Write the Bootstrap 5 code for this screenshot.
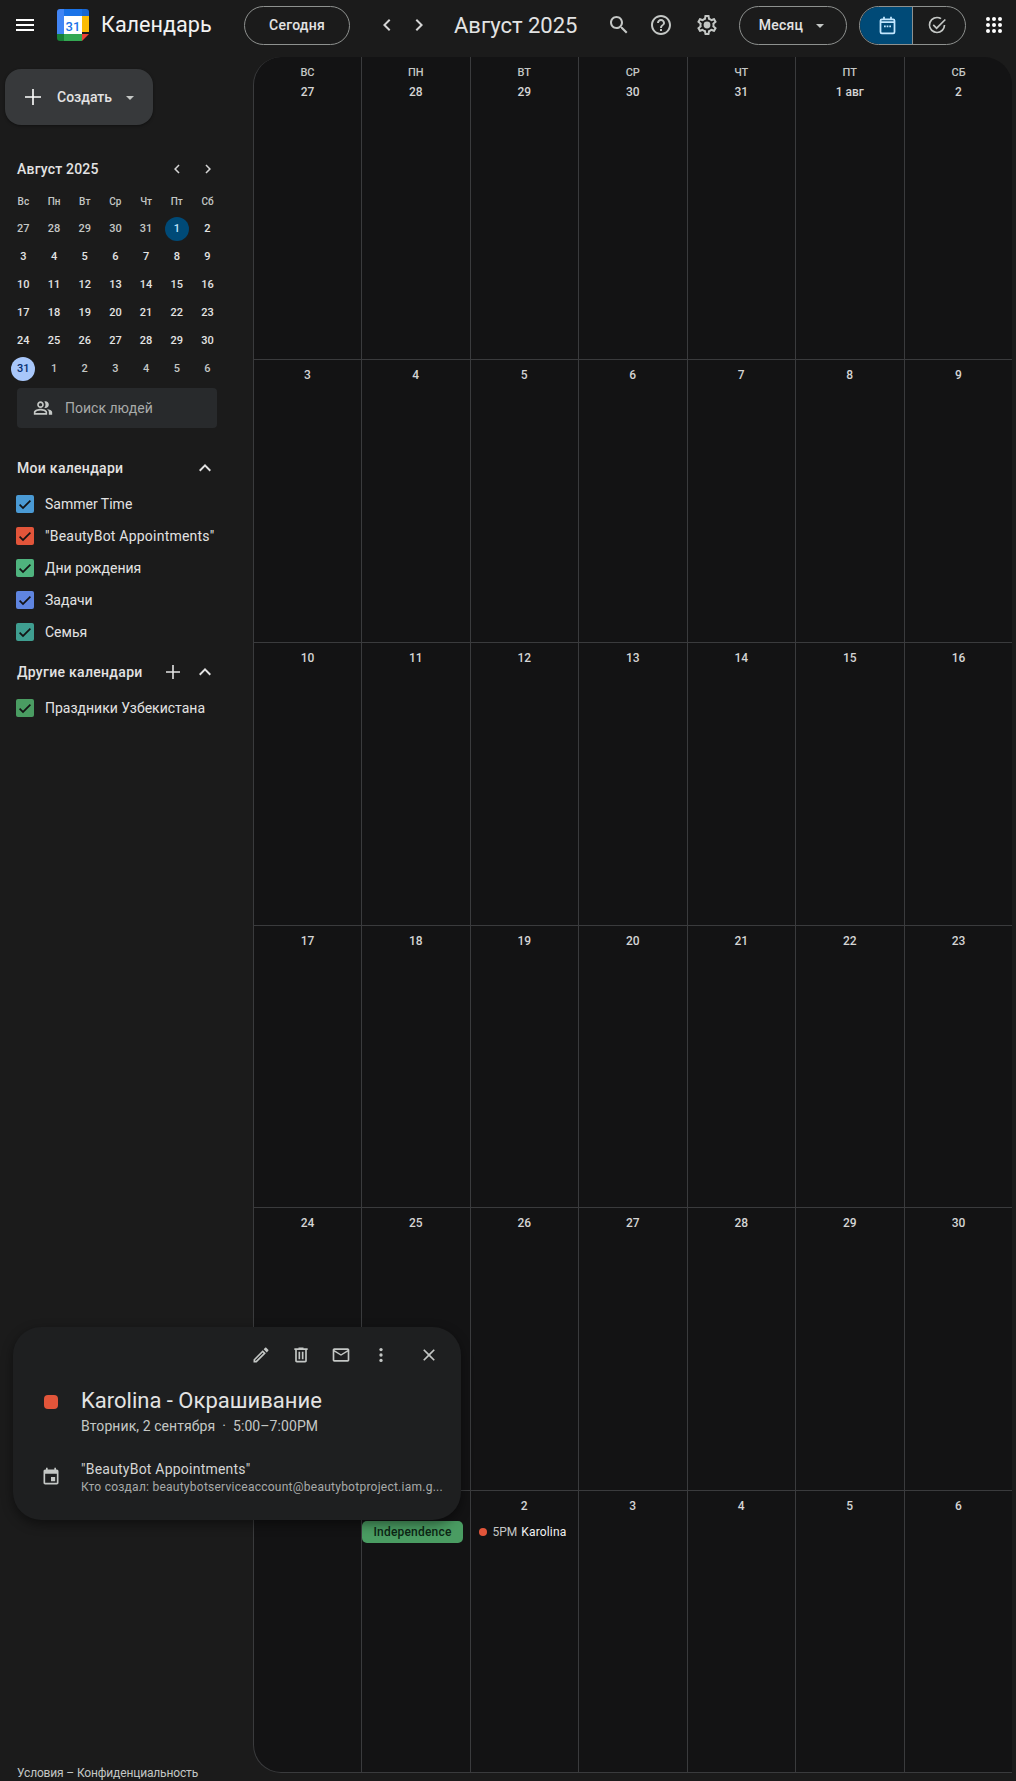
<!DOCTYPE html>
<html lang="ru">
<head>
    <meta charset="UTF-8">
    <meta name="viewport" content="width=device-width, initial-scale=1.0">
    <title>Календарь</title>
    <link href="https://cdn.jsdelivr.net/npm/bootstrap@5.3.3/dist/css/bootstrap.min.css" rel="stylesheet">
    <style>
        html, body { height: 100%; }
        body {
            background-color: #1b1b1b;
            color: #e3e3e3;
            font-family: Roboto, "Noto Sans", sans-serif;
            font-size: 14px;
            width: 1016px;
            height: 1781px;
            overflow: hidden;
            position: relative;
        }
        svg { display: block; fill: currentColor; flex: none; }

        /* top bar */
        .topbar { height: 57px; padding-bottom: 7px; }
        .burger { margin-left: 13px; width: 24px; color: #fff; }
        .logo-svg { margin-left: 20px; }
        .brand { margin-left: 12px; width: 127px; font-size: 21.6px; color: #f2f2f2; white-space: nowrap; }
        .pill-btn {
            height: 39px;
            border: 1px solid #8e918f;
            border-radius: 20px;
            color: #e3e3e3;
            font-weight: 500;
            font-size: 14px;
            letter-spacing: .25px;
        }
        .today-btn { width: 106px; }
        .nav-ico { width: 24px; color: #d5d5d5; }
        .nav-prev { margin-left: 25px; }
        .nav-next { margin-left: 8px; }
        .month-title { margin-left: 23px; width: 153px; font-size: 22px; color: #e3e3e3; white-space: nowrap; }
        .tool-ico { color: #c4c7c5; }
        .tool-help { margin-left: 18px; }
        .tool-gear { margin-left: 22px; }
        .view-btn { width: 108px; margin-left: 20px; gap: 13px; padding-right: 3px !important; }
        .caret-down { width: 0; height: 0; border-left: 4px solid transparent; border-right: 4px solid transparent; border-top: 4px solid #c4c7c5; margin-top: 2px; }
        .view-toggle { margin-left: 12px; width: 107px; height: 39px; border: 1px solid #8e918f; border-radius: 20px; overflow: hidden; }
        .toggle-on { width: 53px; background-color: #004a77; color: #c2e7ff; border-right: 1px solid #8e918f; padding-left: 4px; }
        .toggle-off { width: 53px; color: #c4c7c5; padding-right: 3px; }
        .apps-ico { margin-left: 16px; color: #fff; }

        /* sidebar */
        .side { width: 253px; height: 1724px; position: relative; flex: none; }
        .create-btn {
            width: 148px;
            height: 56px;
            margin: 12px 0 0 5px;
            background-color: #37393b;
            border-radius: 16px;
            box-shadow: 0 1px 3px rgba(0, 0, 0, .4);
            font-weight: 500;
            color: #e3e3e3;
        }
        .create-plus { margin-left: 16px; color: #fff; }
        .create-label { margin-left: 12px; }
        .create-caret { margin-left: 14px; }
        .mini-head { margin: 34px 36px 0 17px; height: 20px; }
        .mini-title { font-size: 14px; font-weight: 500; color: #e3e3e3; letter-spacing: .2px; }
        .mini-arrows { gap: 13px; }
        .mini-nav { width: 18px; color: #d5d5d5; }
        .mini-grid {
            display: grid;
            grid-template-columns: repeat(7, 30.7px);
            grid-auto-rows: 28px;
            margin: 8px 0 0 8px;
            font-size: 11px;
            font-weight: 500;
            color: #e3e3e3;
        }
        .mini-cell { display: flex; align-items: center; justify-content: center; }
        .mini-dow { height: 28px; font-size: 10px; color: #c4c7c5; }
        .mini-cell span { width: 24px; height: 24px; border-radius: 50%; display: flex; align-items: center; justify-content: center; }
        .mini-faded { color: #c4c7c5; }
        .mini-sel { background-color: #004a77; color: #c2e7ff; }
        .mini-today { background-color: #a8c7fa; color: #062e6f; }
        .people-box {
            width: 200px;
            height: 40px;
            margin: 5px 0 0 17px;
            padding-left: 16px;
            gap: 12px;
            background-color: #282a2c;
            border-radius: 4px;
            color: #a8abaa;
        }
        .people-box svg { color: #c4c7c5; }
        .cal-head { margin-left: 17px; width: 200px; height: 24px; font-weight: 500; color: #e3e3e3; letter-spacing: .3px; }
        .cal-head-my { margin-top: 28px; margin-bottom: 8px; }
        .cal-head-other { margin-top: 12px; margin-bottom: 8px; }
        .cal-head svg { color: #e3e3e3; }
        .cal-row { height: 32px; margin-left: 16px; gap: 11px; color: #e3e3e3; white-space: nowrap; }
        .check-box { width: 18px; height: 18px; border-radius: 2px; color: #131314; display: flex; align-items: center; justify-content: center; flex: none; }
        .quoted-name { letter-spacing: .22px; }
        .side-foot { position: absolute; left: 17px; top: 1707px; font-size: 12px; letter-spacing: -.15px; color: #c4c7c5; white-space: nowrap; }

        /* month grid */
        .month-grid {
            display: grid;
            grid-template-columns: 108px 108.5px 108.5px 108.5px 108.5px 108.5px 108px;
            grid-template-rows: 303px 283px 283px 282px 283px 282px;
            width: 759px;
            height: 1716px;
            background-color: #131314;
            border-left: 1px solid #3a3b3d;
            border-bottom: 1px solid #3a3b3d;
            border-radius: 28px 28px 0 28px;
            overflow: hidden;
        }
        .day-cell { border-right: 1px solid #3a3b3d; border-bottom: 1px solid #3a3b3d; text-align: center; font-size: 12px; font-weight: 500; color: #d5d5d5; padding-top: 7px; min-width: 0; }
        .day-cell:nth-child(7n) { border-right: 0; }
        .day-cell:nth-last-child(-n+7) { border-bottom: 0; }
        .day-first { padding-top: 8px; }
        .dow-label { font-size: 11px; line-height: 16px; color: #c4c7c5; }
        .day-num { line-height: 16px; margin-top: 3px; }
        .day-cell.has-events .day-num { margin-top: 0; }
        .chip-green { width: 101px; height: 22px; margin-top: 7px; background-color: #4a9c62; border-radius: 5px; color: #0c2614; line-height: 22px; font-weight: 500; letter-spacing: .2px; }
        .chip-dot { margin-top: 7px; height: 22px; padding-left: 8px; gap: 6px; font-size: 12px; font-weight: 400; white-space: nowrap; }
        .dot-red { width: 8px; height: 8px; border-radius: 50%; background-color: #e2553a; flex: none; }
        .chip-time { color: #c4c7c5; }
        .chip-name { color: #f2f2f2; margin-left: -2px; letter-spacing: .15px; }

        /* event popup */
        .event-pop {
            position: absolute;
            left: 13px;
            top: 1327px;
            width: 448px;
            height: 193px;
            background-color: #1e1f20;
            border-radius: 28px;
            box-shadow: 0 4px 12px rgba(0, 0, 0, .45);
            padding: 16px 22px 0 31px;
        }
        .pop-tools { height: 24px; }
        .pop-tools svg { color: #c4c7c5; margin-left: 20px; }
        .pop-tools svg.pop-close { margin-left: 28px; }
        .pop-body { margin-top: 20px; }
        .pop-mark { width: 37px; flex: none; }
        .pop-dot { width: 14px; height: 14px; border-radius: 4px; background-color: #e2553a; }
        .pop-title { font-size: 22px; line-height: 28px; color: #e3e3e3; white-space: nowrap; }
        .pop-sub { line-height: 20px; margin-top: 1px; color: #c4c7c5; white-space: nowrap; letter-spacing: .08px; }
        .pop-sep { margin: 0 7px; }
        .pop-cal { margin-top: 23px; }
        .pop-cal-ico { color: #c4c7c5; margin-left: -3px; margin-right: 20px; }
        .pop-cal-name { line-height: 20px; color: #d5d5d5; }
        .pop-cal-by { font-size: 12px; line-height: 16px; color: #a8abaa; white-space: nowrap; letter-spacing: .25px; }
    </style>
</head>
<body>

    <header class="topbar d-flex align-items-center">
        <svg class="burger" width="24" height="24" viewBox="0 0 24 24"><path d="M3 18h18v-2H3v2zm0-5h18v-2H3v2zm0-7v2h18V6H3z"/></svg>
        <svg class="logo-svg" width="32" height="32" viewBox="0 0 32 32">
            <path fill="#fff" d="M7 7h18v18H7z"/>
            <path fill="#1a73e8" d="M7 0h18v7H7z"/>
            <path fill="#1967d2" d="M25 0h4a3 3 0 0 1 3 3v4h-7z"/>
            <path fill="#4285f4" d="M3 0h4v7H0V3a3 3 0 0 1 3-3z"/>
            <path fill="#4285f4" d="M0 7h7v18H0z"/>
            <path fill="#fbbc04" d="M25 7h7v16h-7z"/>
            <path fill="#34a853" d="M7 25h18v7H7z"/>
            <path fill="#188038" d="M0 25h7v7H3a3 3 0 0 1-3-3z"/>
            <path fill="#ea4335" d="M25 32v-7h7z"/>
            <text x="16" y="21.5" text-anchor="middle" font-family="Roboto, sans-serif" font-size="13" font-weight="500" fill="#1a73e8">31</text>
        </svg>
        <div class="brand">Календарь</div>
        <button type="button" class="btn pill-btn today-btn p-0 ms-3">Сегодня</button>
        <svg class="nav-ico nav-prev" width="24" height="24" viewBox="0 0 24 24"><path d="M15.41 7.41L14 6l-6 6 6 6 1.41-1.41L10.83 12z"/></svg>
        <svg class="nav-ico nav-next" width="24" height="24" viewBox="0 0 24 24"><path d="M10 6L8.59 7.41 13.17 12l-4.58 4.59L10 18l6-6z"/></svg>
        <div class="month-title">Август 2025</div>
        <svg class="tool-ico" width="24" height="24" viewBox="0 0 24 24"><path d="M15.5 14h-.79l-.28-.27C15.41 12.59 16 11.11 16 9.5 16 5.91 13.09 3 9.5 3S3 5.91 3 9.5 5.91 16 9.5 16c1.61 0 3.09-.59 4.23-1.57l.27.28v.79l5 4.99L20.49 19l-4.99-5zm-6 0C7.01 14 5 11.99 5 9.5S7.01 5 9.5 5 14 7.01 14 9.5 11.99 14 9.5 14z"/></svg>
        <svg class="tool-ico tool-help" width="24" height="24" viewBox="0 0 24 24"><path d="M11 18h2v-2h-2v2zm1-16C6.48 2 2 6.48 2 12s4.48 10 10 10 10-4.48 10-10S17.52 2 12 2zm0 18c-4.41 0-8-3.59-8-8s3.59-8 8-8 8 3.59 8 8-3.59 8-8 8zm0-14c-2.21 0-4 1.79-4 4h2c0-1.1.9-2 2-2s2 .9 2 2c0 2-3 1.75-3 5h2c0-2.25 3-2.5 3-5 0-2.21-1.79-4-4-4z"/></svg>
        <svg class="tool-ico tool-gear" width="24" height="24" viewBox="0 0 24 24"><path d="M19.43 12.98c.04-.32.07-.64.07-.98 0-.34-.03-.66-.07-.98l2.11-1.65c.19-.15.24-.42.12-.64l-2-3.46c-.09-.16-.26-.25-.44-.25-.06 0-.12.01-.17.03l-2.49 1c-.52-.4-1.08-.73-1.69-.98l-.38-2.65C14.46 2.18 14.25 2 14 2h-4c-.25 0-.46.18-.49.42l-.38 2.65c-.61.25-1.17.59-1.69.98l-2.49-1c-.06-.02-.12-.03-.18-.03-.17 0-.34.09-.43.25l-2 3.46c-.13.22-.07.49.12.64l2.11 1.65c-.04.32-.07.65-.07.98 0 .33.03.66.07.98l-2.11 1.65c-.19.15-.24.42-.12.64l2 3.46c.09.16.26.25.44.25.06 0 .12-.01.17-.03l2.49-1c.52.4 1.08.73 1.69.98l.38 2.65c.03.24.24.42.49.42h4c.25 0 .46-.18.49-.42l.38-2.65c.61-.25 1.17-.59 1.69-.98l2.49 1c.06.02.12.03.18.03.17 0 .34-.09.43-.25l2-3.46c.12-.22.07-.49-.12-.64l-2.11-1.65zm-1.98-1.71c.04.31.05.52.05.73 0 .21-.02.43-.05.73l-.14 1.13.89.7 1.08.84-.7 1.21-1.27-.51-1.04-.42-.9.68c-.43.32-.84.56-1.25.73l-1.06.43-.16 1.13-.2 1.35h-1.4l-.19-1.35-.16-1.13-1.06-.43c-.43-.18-.83-.41-1.23-.71l-.91-.7-1.06.43-1.27.51-.7-1.21 1.08-.84.89-.7-.14-1.13c-.03-.31-.05-.54-.05-.74s.02-.43.05-.73l.14-1.13-.89-.7-1.08-.84.7-1.21 1.27.51 1.04.42.9-.68c.43-.32.84-.56 1.25-.73l1.06-.43.16-1.13.2-1.35h1.39l.19 1.35.16 1.13 1.06.43c.43.18.83.41 1.23.71l.91.7 1.06-.43 1.27-.51.7 1.21-1.07.85-.89.7.14 1.13z"/><circle cx="12" cy="12" r="3.4"/></svg>
        <button type="button" class="btn pill-btn view-btn p-0 d-flex align-items-center justify-content-center">Месяц <span class="caret-down"></span></button>
        <div class="view-toggle d-flex">
            <div class="toggle-on d-flex align-items-center justify-content-center">
                <svg width="21" height="21" viewBox="0 0 24 24"><path d="M7 2h2v2h6V2h2v2h1.500A2.500 2.500 0 0 1 21 6.500v13a2.500 2.500 0 0 1-2.500 2.500h-13A2.500 2.500 0 0 1 3 19.500v-13A2.500 2.500 0 0 1 5.500 4H7V2zM5 9v10.500c0 .28.22.5.5.5h13a.5.5 0 0 0 .5-.5V9H5zm0-2h14v-.5a.5.5 0 0 0-.5-.5h-13a.5.5 0 0 0-.5.5V7zm3 5h2v2H8v-2zm3 0h2v2h-2v-2zm3 0h2v2h-2v-2z"/></svg>
            </div>
            <div class="toggle-off d-flex align-items-center justify-content-center">
                <svg width="20" height="20" viewBox="0 0 24 24"><path d="M12 2a10 10 0 0 1 5.500 1.650l-1.450 1.450A8 8 0 1 0 20 12h2A10 10 0 1 1 12 2z"/><path d="M21.300 4.700l1.400 1.400L11.500 17.300l-4.700-4.700 1.400-1.400 3.300 3.300z"/></svg>
            </div>
        </div>
        <svg class="apps-ico" width="24" height="24" viewBox="0 0 24 24"><circle cx="6" cy="6" r="2"/><circle cx="12" cy="6" r="2"/><circle cx="18" cy="6" r="2"/><circle cx="6" cy="12" r="2"/><circle cx="12" cy="12" r="2"/><circle cx="18" cy="12" r="2"/><circle cx="6" cy="18" r="2"/><circle cx="12" cy="18" r="2"/><circle cx="18" cy="18" r="2"/></svg>
    </header>

    <div class="d-flex">
        <aside class="side">
            <div class="create-btn d-flex align-items-center">
                <svg class="create-plus" width="24" height="24" viewBox="0 0 24 24"><path d="M20 12.800h-7.200V20h-1.600v-7.200H4v-1.600h7.200V4h1.600v7.200H20z"/></svg>
                <span class="create-label">Создать</span>
                <span class="caret-down create-caret"></span>
            </div>

            <div class="mini-head d-flex align-items-center justify-content-between">
                <span class="mini-title">Август 2025</span>
                <span class="mini-arrows d-flex">
                    <svg class="mini-nav" width="18" height="18" viewBox="0 0 24 24"><path d="M15.410 7.410L14 6l-6 6 6 6 1.410-1.410L10.830 12z"/></svg>
                    <svg class="mini-nav" width="18" height="18" viewBox="0 0 24 24"><path d="M10 6L8.590 7.410 13.170 12l-4.580 4.590L10 18l6-6z"/></svg>
                </span>
            </div>
            <div class="mini-grid" id="mini-grid"></div>

            <div class="people-box d-flex align-items-center">
                <svg width="20" height="20" viewBox="0 0 24 24"><path d="M16.670 13.130C18.040 14.060 19 15.320 19 17v3h4v-3c0-2.180-3.570-3.470-6.330-3.870zM15 12c2.210 0 4-1.790 4-4s-1.790-4-4-4c-.47 0-.91.100-1.330.240C14.500 5.270 15 6.580 15 8s-.5 2.730-1.330 3.760c.42.140.86.240 1.330.240zM9 12c2.210 0 4-1.790 4-4s-1.790-4-4-4-4 1.790-4 4 1.790 4 4 4zm0-6c1.100 0 2 .9 2 2s-.9 2-2 2-2-.9-2-2 .9-2 2-2zM9 13c-2.670 0-8 1.340-8 4v3h16v-3c0-2.660-5.330-4-8-4zm6 5H3v-.99C3.200 16.290 6.300 15 9 15s5.800 1.290 6 2v1z"/></svg>
                <span>Поиск людей</span>
            </div>

            <div class="cal-head cal-head-my d-flex align-items-center justify-content-between">
                <span>Мои календари</span>
                <svg width="24" height="24" viewBox="0 0 24 24"><path d="M12 8l-6 6 1.410 1.410L12 10.830l4.590 4.580L18 14z"/></svg>
            </div>
            <div id="my-cals"></div>

            <div class="cal-head cal-head-other d-flex align-items-center justify-content-between">
                <span>Другие календари</span>
                <span class="d-flex align-items-center gap-2">
                    <svg width="24" height="24" viewBox="0 0 24 24"><path d="M19 12.800h-6.200V19h-1.600v-6.200H5v-1.600h6.200V5h1.600v6.200H19z"/></svg>
                    <svg width="24" height="24" viewBox="0 0 24 24"><path d="M12 8l-6 6 1.410 1.410L12 10.830l4.590 4.580L18 14z"/></svg>
                </span>
            </div>
            <div id="other-cals"></div>

            <div class="side-foot">Условия – Конфиденциальность</div>
        </aside>

        <main class="month-grid" id="month-grid"></main>
    </div>

    <div class="event-pop">
        <div class="pop-tools d-flex align-items-center justify-content-end">
            <svg width="20" height="20" viewBox="0 0 24 24"><path d="M3 17.250V21h3.750L17.810 9.940l-3.750-3.750L3 17.250zM5.920 19H5v-.92l9.060-9.060.92.92L5.920 19zM20.710 5.630l-2.340-2.340c-.2-.2-.45-.29-.71-.29s-.51.100-.7.290l-1.830 1.830 3.750 3.750 1.830-1.830c.39-.39.39-1.020 0-1.410z"/></svg>
            <svg width="20" height="20" viewBox="0 0 24 24"><path d="M15 4V3H9v1H4v2h1v13c0 1.100.9 2 2 2h10c1.100 0 2-.9 2-2V6h1V4h-5zm2 15H7V6h10v13zM9 8h2v9H9zm4 0h2v9h-2z"/></svg>
            <svg width="20" height="20" viewBox="0 0 24 24"><path d="M20 4H4c-1.100 0-2 .9-2 2v12c0 1.100.9 2 2 2h16c1.100 0 2-.9 2-2V6c0-1.100-.9-2-2-2zm0 14H4V8l8 5 8-5v10zm-8-7L4 6h16l-8 5z"/></svg>
            <svg width="20" height="20" viewBox="0 0 24 24"><circle cx="12" cy="5.500" r="2"/><circle cx="12" cy="12" r="2"/><circle cx="12" cy="18.500" r="2"/></svg>
            <svg class="pop-close" width="20" height="20" viewBox="0 0 24 24"><path d="M19 6.410L17.590 5 12 10.590 6.410 5 5 6.410 10.590 12 5 17.590 6.410 19 12 13.410 17.590 19 19 17.590 13.410 12z"/></svg>
        </div>
        <div class="pop-body d-flex">
            <div class="pop-mark pt-2"><div class="pop-dot"></div></div>
            <div>
                <div class="pop-title">Karolina - Окрашивание</div>
                <div class="pop-sub">Вторник, 2 сентября<span class="pop-sep">·</span>5:00–7:00PM</div>
            </div>
        </div>
        <div class="pop-cal d-flex align-items-center">
            <svg class="pop-cal-ico" width="20" height="20" viewBox="0 0 24 24"><path d="M17 12h-5v5h5v-5zM16 1v2H8V1H6v2H5c-1.110 0-1.990.9-1.990 2L3 19c0 1.100.89 2 2 2h14c1.100 0 2-.9 2-2V5c0-1.100-.9-2-2-2h-1V1h-2zm3 18H5V8h14v11z"/></svg>
            <div>
                <div class="pop-cal-name quoted-name">"BeautyBot Appointments"</div>
                <div class="pop-cal-by">Кто создал: beautybotserviceaccount@beautybotproject.iam.g...</div>
            </div>
        </div>
    </div>

    <script>
        // Мини-календарь
        const miniDow = ['Вс', 'Пн', 'Вт', 'Ср', 'Чт', 'Пт', 'Сб'];
        const miniDays = [27, 28, 29, 30, 31, 1, 2, 3, 4, 5, 6, 7, 8, 9, 10, 11, 12, 13, 14, 15, 16, 17, 18, 19, 20, 21, 22, 23, 24, 25, 26, 27, 28, 29, 30, 31, 1, 2, 3, 4, 5, 6];
        let miniHtml = miniDow.map(d => `<div class="mini-cell mini-dow">${d}</div>`).join('');
        miniDays.forEach((d, i) => {
            let cls = (i < 5 || i > 35) ? 'mini-faded' : '';
            if (i === 5) cls = 'mini-sel';
            if (i === 35) cls = 'mini-today';
            miniHtml += `<div class="mini-cell"><span class="${cls}">${d}</span></div>`;
        });
        document.getElementById('mini-grid').innerHTML = miniHtml;

        // Списки календарей
        const checkIcon = '<svg width="16" height="16" viewBox="0 0 24 24"><path d="M9 16.200L4.800 12l-1.800 1.800 6 6 12-12-1.800-1.800z"/></svg>';
        const calRow = (name, color, cls) => `<div class="cal-row d-flex align-items-center"><span class="check-box" style="background-color:${color}">${checkIcon}</span><span class="${cls || ''}">${name}</span></div>`;
        document.getElementById('my-cals').innerHTML = [
            ['Sammer Time', '#4a9ad4'],
            ['"BeautyBot Appointments"', '#e2553a', 'quoted-name'],
            ['Дни рождения', '#4fb37e'],
            ['Задачи', '#5f85e0'],
            ['Семья', '#3f9e90']
        ].map(c => calRow(c[0], c[1], c[2])).join('');
        document.getElementById('other-cals').innerHTML = calRow('Праздники Узбекистана', '#4a9c62');

        // Сетка месяца
        const dow = ['ВС', 'ПН', 'ВТ', 'СР', 'ЧТ', 'ПТ', 'СБ'];
        const days = [27, 28, 29, 30, 31, '1 авг', 2, 3, 4, 5, 6, 7, 8, 9, 10, 11, 12, 13, 14, 15, 16, 17, 18, 19, 20, 21, 22, 23, 24, 25, 26, 27, 28, 29, 30, 31, '1 сент.', 2, 3, 4, 5, 6];
        document.getElementById('month-grid').innerHTML = days.map((d, i) => {
            if (i < 7) return `<div class="day-cell day-first"><div class="dow-label">${dow[i]}</div><div class="day-num">${d}</div></div>`;
            let extra = '';
            if (i === 36) extra = '<div class="chip-green">Independence</div>';
            if (i === 37) extra = '<div class="chip-dot d-flex align-items-center"><span class="dot-red"></span><span class="chip-time">5PM</span><span class="chip-name">Karolina</span></div>';
            return `<div class="day-cell has-events"><div class="day-num">${d}</div>${extra}</div>`;
        }).join('');
    </script>
</body>
</html>
